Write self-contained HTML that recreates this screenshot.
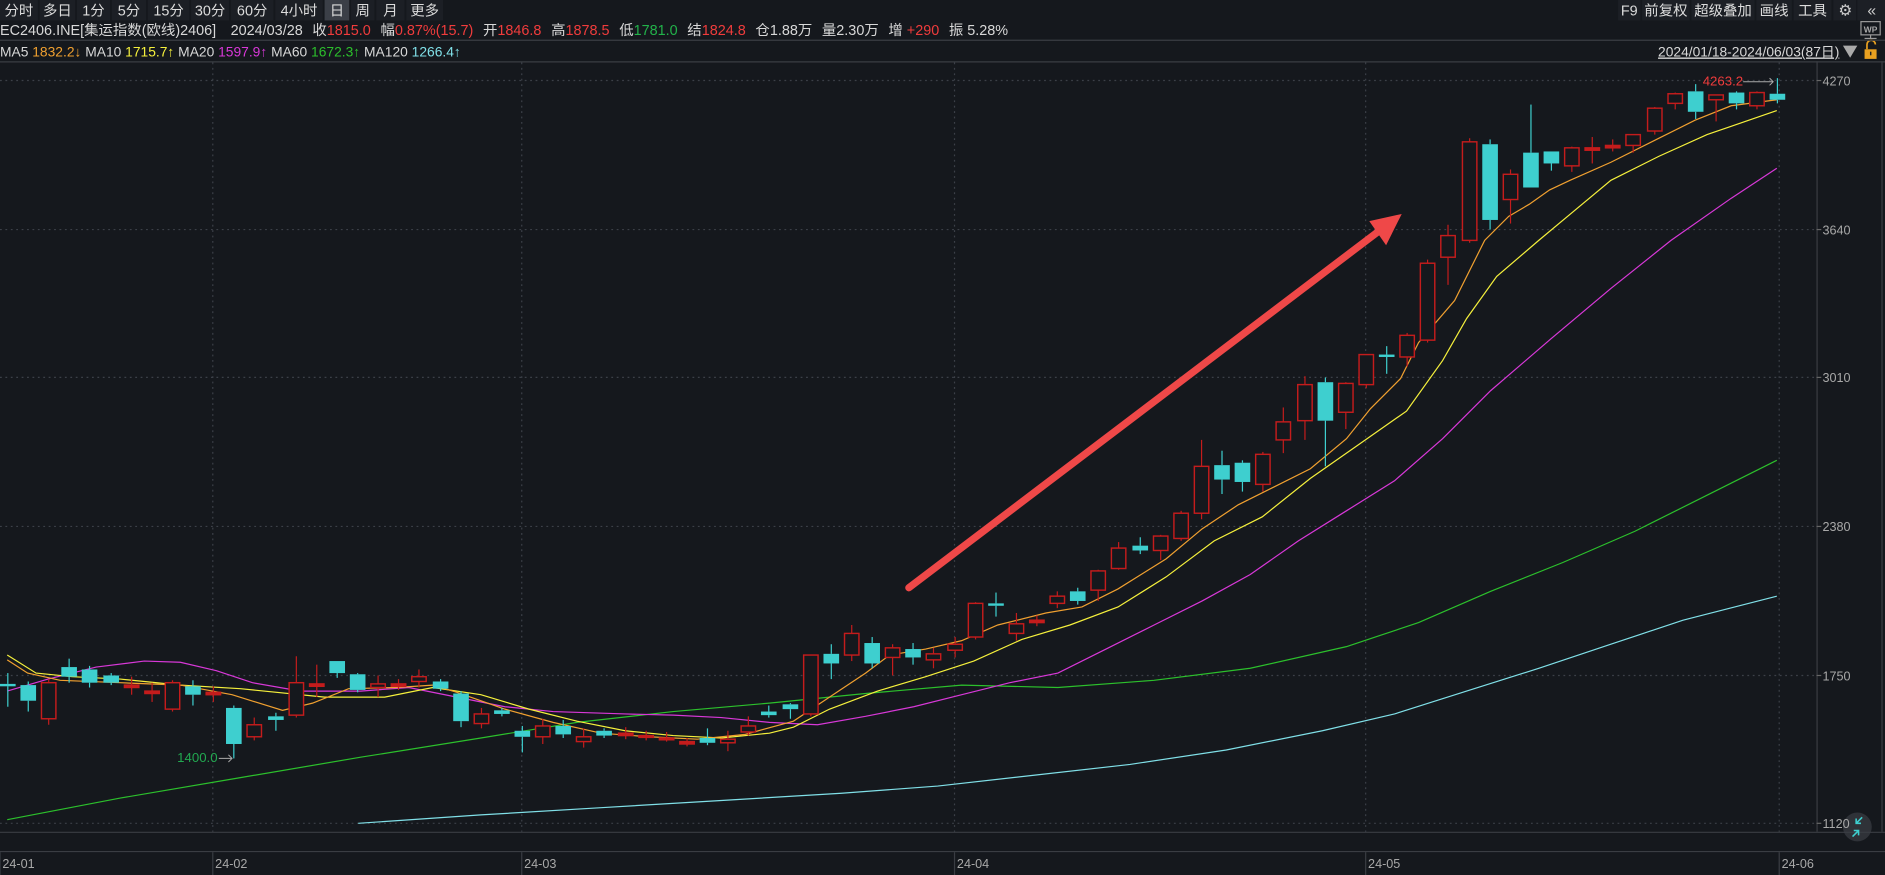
<!DOCTYPE html>
<html><head><meta charset="utf-8"><style>
html,body{margin:0;padding:0;background:#15181d;overflow:hidden}
svg{display:block}
text{font-family:"Liberation Sans","Noto Sans CJK SC",sans-serif}
</style></head><body>
<svg id="s" width="1885" height="875" viewBox="0 0 1568 728" preserveAspectRatio="none" xmlns="http://www.w3.org/2000/svg">
<rect width="1568" height="728" fill="#15181d"/>
<g id="tb"></g>
<g font-size="12" fill="#d8d8d8">
<text x="0" y="29"><tspan>EC2406.INE[集运指数(欧线)2406]</tspan><tspan dx="12">2024/03/28</tspan><tspan dx="8">收</tspan><tspan fill="#f03c3c">1815.0</tspan><tspan dx="8">幅</tspan><tspan fill="#f03c3c">0.87%(15.7)</tspan><tspan dx="8">开</tspan><tspan fill="#f03c3c">1846.8</tspan><tspan dx="8">高</tspan><tspan fill="#f03c3c">1878.5</tspan><tspan dx="8">低</tspan><tspan fill="#22b24a">1781.0</tspan><tspan dx="8">结</tspan><tspan fill="#f03c3c">1824.8</tspan><tspan dx="8">仓1.88万</tspan><tspan dx="8">量2.30万</tspan><tspan dx="8">增</tspan><tspan fill="#f03c3c"> +290</tspan><tspan dx="8">振 5.28%</tspan></text>
<text x="0" y="47" font-size="11.5"><tspan>MA5 </tspan><tspan fill="#f0a030">1832.2↓</tspan><tspan> MA10 </tspan><tspan fill="#f5f03c">1715.7↑</tspan><tspan> MA20 </tspan><tspan fill="#d838d8">1597.9↑</tspan><tspan> MA60 </tspan><tspan fill="#2cc02c">1672.3↑</tspan><tspan> MA120 </tspan><tspan fill="#80e0e8">1266.4↑</tspan></text>
<text x="1530" y="47" font-size="11.5" text-anchor="end" text-decoration="underline">2024/01/18-2024/06/03(87日)</text>
</g>
<polygon points="1533,38 1545,38 1539,48" fill="#aaa"/>
<g fill="none" stroke="#e8a020" stroke-width="1.4"><path d="M1553,41 v-4 a3.5,3.5 0 0 1 7,0"/></g>
<rect x="1551" y="41" width="10" height="8" fill="#e8a020"/><rect x="1555.5" y="43" width="1.2" height="3" fill="#222"/>
<line x1="0" y1="33.5" x2="1568" y2="33.5" stroke="#3a3d43"/>
<line x1="0" y1="51.5" x2="1568" y2="51.5" stroke="#3a3d43"/>
<line x1="0" y1="692.5" x2="1568" y2="692.5" stroke="#3a3d43"/>
<line x1="0" y1="708.5" x2="1568" y2="708.5" stroke="#3a3d43"/>
<line x1="1511.5" y1="51" x2="1511.5" y2="692" stroke="#3a3d43"/>
<line x1="1565.5" y1="51" x2="1565.5" y2="692" stroke="#3a3d43"/>
<g stroke="#9a9a9a" fill="none" stroke-width="1"><rect x="1548" y="18" width="16" height="11"/><line x1="1556" y1="29" x2="1556" y2="32"/><line x1="1551" y1="32" x2="1561" y2="32"/></g>
<text x="1556" y="27" font-size="7" fill="#aaa" text-anchor="middle" font-weight="bold">WP</text>
<g id="grid"></g>
<g id="ma"></g>
<g id="cd"></g>
<line x1="756" y1="489" x2="1146" y2="193" stroke="#ef4848" stroke-width="6" stroke-linecap="round"/>
<polygon points="1166,178 1139,184 1153,204" fill="#ef4848"/>
<text x="1450" y="71" font-size="11" fill="#f03c3c" text-anchor="end">4263.2</text>
<path d="M1450,68 h25 M1472,65 l3,3 l-3,3" stroke="#aaa" fill="none" stroke-width="0.8"/>
<text x="181" y="634" font-size="11" fill="#22a850" text-anchor="end">1400.0</text>
<path d="M182,631 h11 M190,628 l3,3 l-3,3" stroke="#aaa" fill="none" stroke-width="0.8"/>
<circle cx="1545" cy="688" r="12" fill="#3a3d44" opacity="0.7"/>
<g font-size="10.5" fill="#a8a8a8" id="ax"></g>
<g stroke="#3ecfcf" stroke-width="1.3" fill="none"><path d="M1549,680 l-5,5 M1544,681 v4 h4 M1541,696 l5,-5 M1546,695 v-4 h-4"/></g>
</svg>
<script>
var NS="http://www.w3.org/2000/svg";
function el(p,t,a,txt){var e=document.createElementNS(NS,t);for(var k in a)e.setAttribute(k,a[k]);if(txt!=null)e.textContent=txt;document.getElementById(p).appendChild(e);return e;}
var tb=[["分时",0,33],["多日",33,64],["1分",64,93],["5分",93,123],["15分",123,159],["30分",159,192],["60分",192,229],["4小时",229,270],["日",270,292],["周",292,313],["月",313,338],["更多",338,370],
["F9",1346,1366],["前复权",1366,1407],["超级叠加",1407,1461],["画线",1461,1492],["工具",1492,1525]];
tb.forEach(function(b){el("tb","rect",{x:b[1],y:0,width:b[2]-b[1]-1.5,height:17,fill:b[0]=="日"?"#3b3f47":"#1c1f25"});
el("tb","text",{x:(b[1]+b[2])/2-0.75,y:13,"font-size":12,fill:"#dcdcdc","text-anchor":"middle"},b[0]);});
el("tb","rect",{x:1525,y:0,width:19,height:17,fill:"#1c1f25"});el("tb","rect",{x:1545,y:0,width:23,height:17,fill:"#1c1f25"});
el("tb","text",{x:1535,y:13,"font-size":13,fill:"#ccc","text-anchor":"middle"},"⚙");
el("tb","text",{x:1557,y:13,"font-size":13,fill:"#ccc","text-anchor":"middle"},"«");
[67,191,314,438,562,685].forEach(function(y){el("grid","line",{x1:0,y1:y,x2:1511,y2:y,stroke:"#3c4048","stroke-dasharray":"1.5,3"});});
[177,434,794,1136,1480].forEach(function(x){el("grid","line",{x1:x,y1:52,x2:x,y2:692,stroke:"#3c4048","stroke-dasharray":"1.5,3"});});
[["4270",67],["3640",191],["3010",314],["2380",438],["1750",562],["1120",685]].forEach(function(p){
el("ax","text",{x:1516,y:p[1]+4},p[0]);el("ax","line",{x1:1511,y1:p[1],x2:1515,y2:p[1],stroke:"#666"});});
[["24-01",2],["24-02",179],["24-03",436],["24-04",796],["24-05",1138],["24-06",1482]].forEach(function(p){
el("ax","text",{x:p[1],y:722},p[0]);el("ax","line",{x1:p[1]-2,y1:709,x2:p[1]-2,y2:728,stroke:"#3a3d43"});});
function pl(c,pts){el("ma","polyline",{points:pts,fill:"none",stroke:c,"stroke-width":1});}
pl("#2cc02c","6,682 100,664 200,647 300,630 400,614 480,601 560,592 640,585 720,577 800,570 880,572 960,566 1040,556 1120,538 1180,518 1240,492 1300,468 1360,442 1420,412 1478,383");
pl("#80e0e8","298,685 400,678 500,672 600,666 700,660 780,654 860,645 940,636 1020,624 1100,608 1160,594 1220,575 1280,556 1340,536 1400,516 1478,496");
pl("#d838d8","6,575 40,565 80,555 120,550 150,551 180,558 210,568 250,575 300,575 340,572 380,580 420,588 460,592 520,594 560,595 600,597 640,601 680,603 720,596 760,588 800,578 840,568 880,560 920,540 960,520 1000,500 1040,478 1080,450 1120,425 1160,400 1200,365 1240,325 1290,282 1340,240 1390,200 1440,165 1478,140");
pl("#f5f03c","6,545 30,560 60,563 100,565 150,570 200,573 270,580 320,580 360,572 400,578 440,590 480,600 520,608 560,612 600,614 640,610 660,605 690,590 730,575 770,563 810,550 850,532 890,520 930,505 970,480 1010,450 1050,430 1090,398 1130,370 1170,342 1200,300 1220,265 1245,230 1280,200 1310,175 1340,150 1380,130 1420,112 1478,92");
pl("#f0a030","6,549 23,560 50,566 100,568 150,570 193,578 235,591 260,585 290,573 330,572 360,570 380,576 420,590 460,601 500,610 540,613 580,615 620,611 660,600 690,580 720,560 740,545 770,540 800,533 830,520 870,510 900,505 930,490 970,465 1000,440 1030,420 1060,405 1090,390 1120,365 1140,340 1165,315 1180,285 1210,250 1235,200 1255,180 1272,170 1289,158 1306,150 1340,135 1380,115 1410,100 1440,88 1478,83");
var C=[[0,569,571,560,588],[0,570,583,567,592],[1,568,598,565,603],[0,555,563,548,568],[0,557,568,554,572],[0,562,568,560,570],[1,570,572,563,578],[1,575,577,568,584],[1,568,590,566,592],[0,571,578,566,587],
[1,576,578,571,584],[0,589,619,587,631],[1,603,613,597,616],[0,596,599,593,608],[1,568,595,546,597],[1,569,571,553,580],[0,550,560,550,564],[0,561,574,560,576],[1,569,572,562,580],[1,569,571,565,574],
[1,563,567,557,572],[0,567,573,565,575],[0,577,600,575,605],[1,594,602,589,606],[0,591,594,589,596],[0,608,613,604,626],[1,604,613,598,619],[0,604,611,599,614],[1,613,617,606,622],[0,608,612,606,614],
[1,610,612,605,615],[1,612,613,608,616],[1,614,615,609,617],[1,617,619,614,621],[0,614,618,606,620],[1,615,618,608,625],[1,604,609,596,612],[0,592,595,587,597],[0,586,590,585,598],[1,545,594,545,596],
[0,544,552,536,565],[1,527,545,520,550],[0,535,552,530,556],[1,539,547,536,562],[0,540,547,535,553],[1,544,549,539,556],[1,536,541,530,547],[1,502,530,501,532],[0,502,504,493,513],[1,519,527,510,533],
[1,516,518,512,521],[1,496,502,492,506],[0,492,500,489,503],[1,475,491,474,500],[1,456,473,451,474],[0,454,458,447,461],[1,446,458,445,466],[1,427,448,425,450],[1,388,427,366,432],[0,387,399,375,411],
[0,385,401,383,409],[1,378,403,376,409],[1,351,366,339,377],[1,320,350,313,366],[0,318,350,314,388],[1,319,343,318,357],[1,295,320,295,323],[0,295,297,288,311],[1,279,297,277,305],[1,219,283,216,285],
[1,196,214,187,237],[1,118,200,115,202],[0,120,183,116,191],[1,145,166,141,186],[0,127,156,87,156],[0,126,136,126,142],[1,123,138,122,143],[1,123,125,114,136],[1,121,123,116,126],[1,112,121,112,127],
[1,90,109,89,112],[1,78,86,77,91],[0,76,93,70,99],[1,79,83,79,101],[0,77,86,76,91],[1,77,88,76,91],[0,78,83,65,86]];
var RED="#c41c1c",CY="#3ecfcf";
C.forEach(function(c,i){var x=Math.round(6+i*17.12)+0.5;var col=c[0]?RED:CY;var h=Math.max(c[2]-c[1],1.5);
el("cd","line",{x1:x,y1:c[3],x2:x,y2:c[1],stroke:col,"stroke-width":1});
el("cd","line",{x1:x,y1:c[1]+h,x2:x,y2:c[4],stroke:col,"stroke-width":1});
if(c[0])el("cd","rect",{x:x-6,y:c[1],width:12,height:h,fill:h<3?RED:"#15181d",stroke:RED,"stroke-width":1.2});
else el("cd","rect",{x:x-6.5,y:c[1],width:13,height:h,fill:CY});});
</script>
</body></html>
